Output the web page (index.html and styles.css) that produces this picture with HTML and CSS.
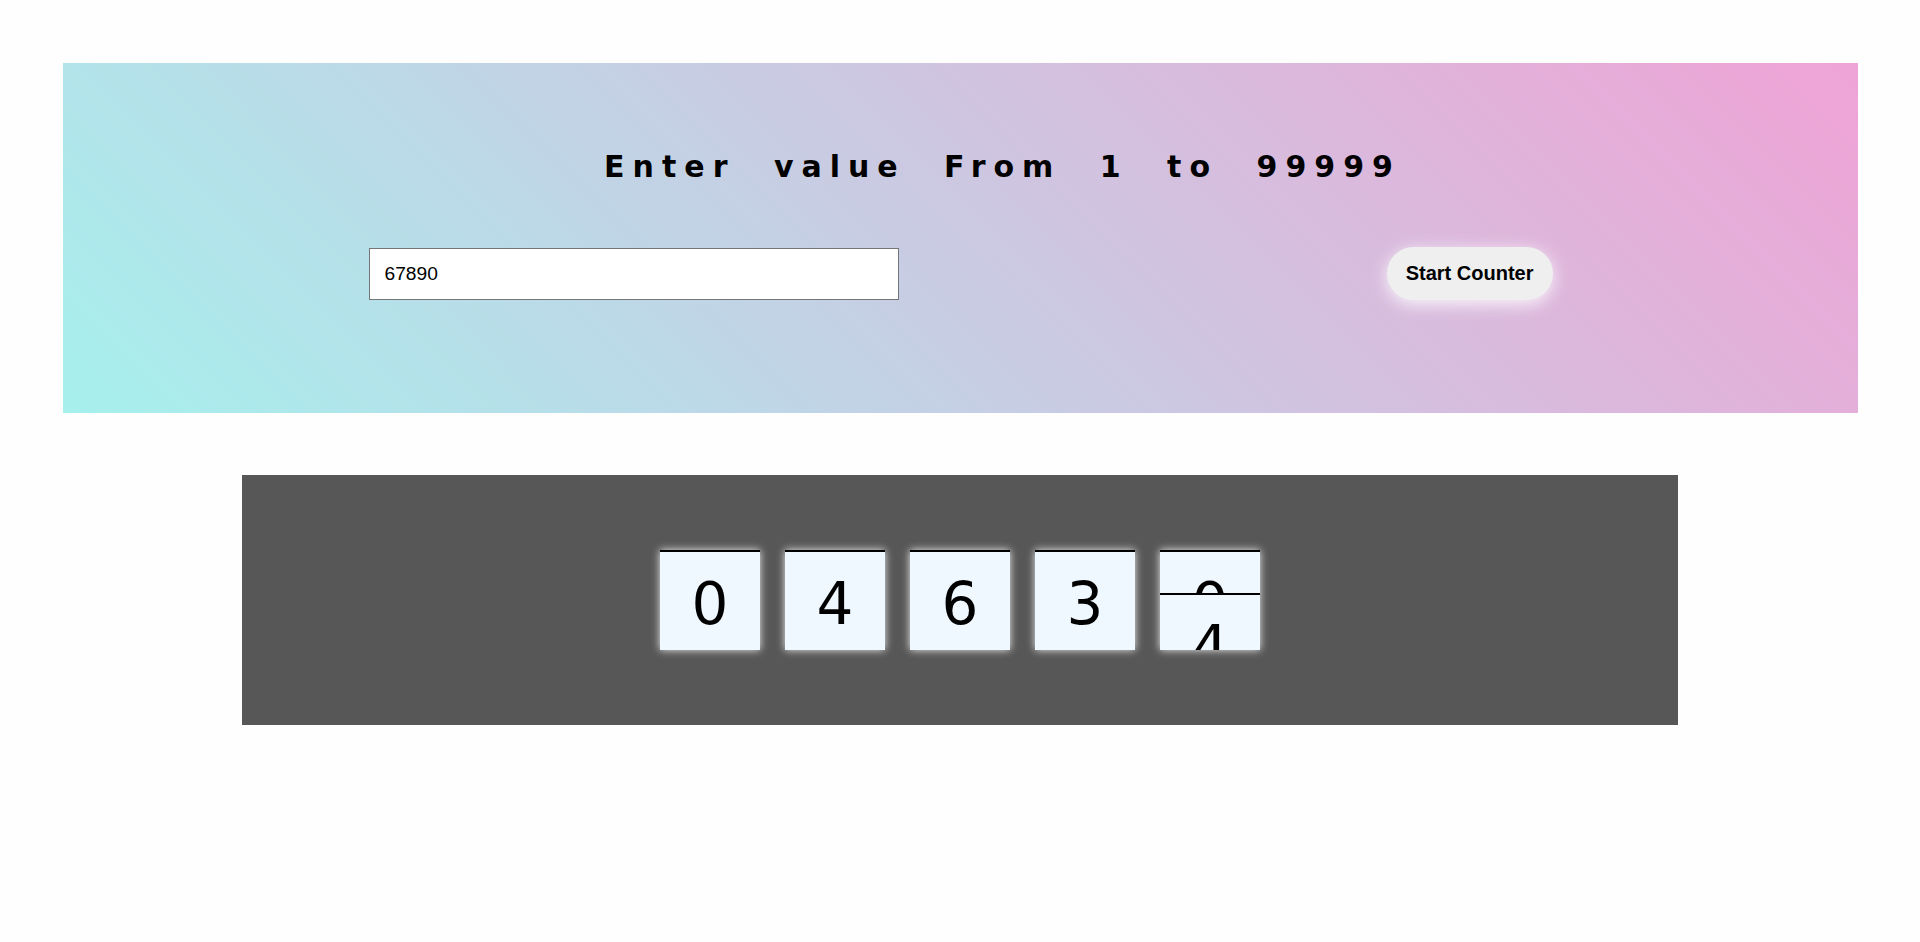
FILE: index.html
```html
<!DOCTYPE html>
<html lang="en">
<head>
<meta charset="utf-8">
<title>Counter</title>
<link rel="stylesheet" href="styles.css">
</head>
<body>
  <section class="banner">
    <h1 class="title">Enter value From 1 to 99999</h1>
    <div class="controls">
      <input class="value-input" type="text" value="67890">
      <button class="start-btn" type="button">Start Counter</button>
    </div>
  </section>

  <section class="board">
    <div class="digits">
      <div class="digit"><div class="cell">0</div></div>
      <div class="digit"><div class="cell">4</div></div>
      <div class="digit"><div class="cell">6</div></div>
      <div class="digit"><div class="cell">3</div></div>
      <div class="digit flipping">
        <div class="cell">0</div>
        <div class="cell next">4</div>
      </div>
    </div>
  </section>
</body>
</html>
```
FILE: styles.css
```css
html, body {
  margin: 0;
  padding: 0;
  background: #fefefe;
}

body {
  font-family: "Liberation Sans", Arial, sans-serif;
}

.banner {
  margin: 63px 62px 0 63px;
  height: 350px;
  box-sizing: border-box;
  padding-top: 84px;
  background: linear-gradient(45deg, #a6f0ee 0%, #efa3d6 100%);
}

.title {
  margin: 0;
  padding-left: 84px;
  height: 40px;
  line-height: 40px;
  text-align: center;
  font-family: "Comic Sans MS", "DejaVu Sans", sans-serif;
  font-size: 30px;
  font-weight: bold;
  letter-spacing: 8px;
  word-spacing: 20px;
  color: #000;
}

.controls {
  width: 1184px;
  margin: 60px auto 0;
  display: flex;
  justify-content: space-between;
  align-items: center;
}

.value-input {
  width: 530px;
  height: 52px;
  box-sizing: border-box;
  border: 1px solid #767676;
  padding: 0 15px;
  font-family: "Liberation Sans", Arial, sans-serif;
  font-size: 19.2px;
  color: #000;
  background: #fff;
  outline: none;
}

.start-btn {
  height: 53px;
  padding: 0 19px;
  border: none;
  border-radius: 27px;
  background: #efefef;
  font-family: "Liberation Sans", Arial, sans-serif;
  font-size: 20px;
  font-weight: bold;
  color: #000;
  box-shadow: 0 4px 18px rgba(255, 255, 255, 0.9);
  cursor: pointer;
}

.board {
  width: 1436px;
  height: 250px;
  margin: 62px auto 0;
  box-sizing: border-box;
  padding-top: 75px;
  background: #575757;
}

.digits {
  display: flex;
  justify-content: center;
  gap: 25px;
}

.digit {
  width: 100px;
  height: 100px;
  overflow: hidden;
  display: grid;
  box-shadow: 0 0 8px rgba(255, 255, 255, 0.9);
  background: #f0f8ff;
}

.cell {
  grid-area: 1 / 1;
  height: 100px;
  box-sizing: border-box;
  border-top: 2px solid #000;
  background: #f0f8ff;
  text-align: center;
  line-height: 104px;
  font-family: "Comic Sans MS", "DejaVu Sans", sans-serif;
  font-size: 58px;
  color: #000;
}

.cell.next {
  transform: translateY(43px);
}
```
